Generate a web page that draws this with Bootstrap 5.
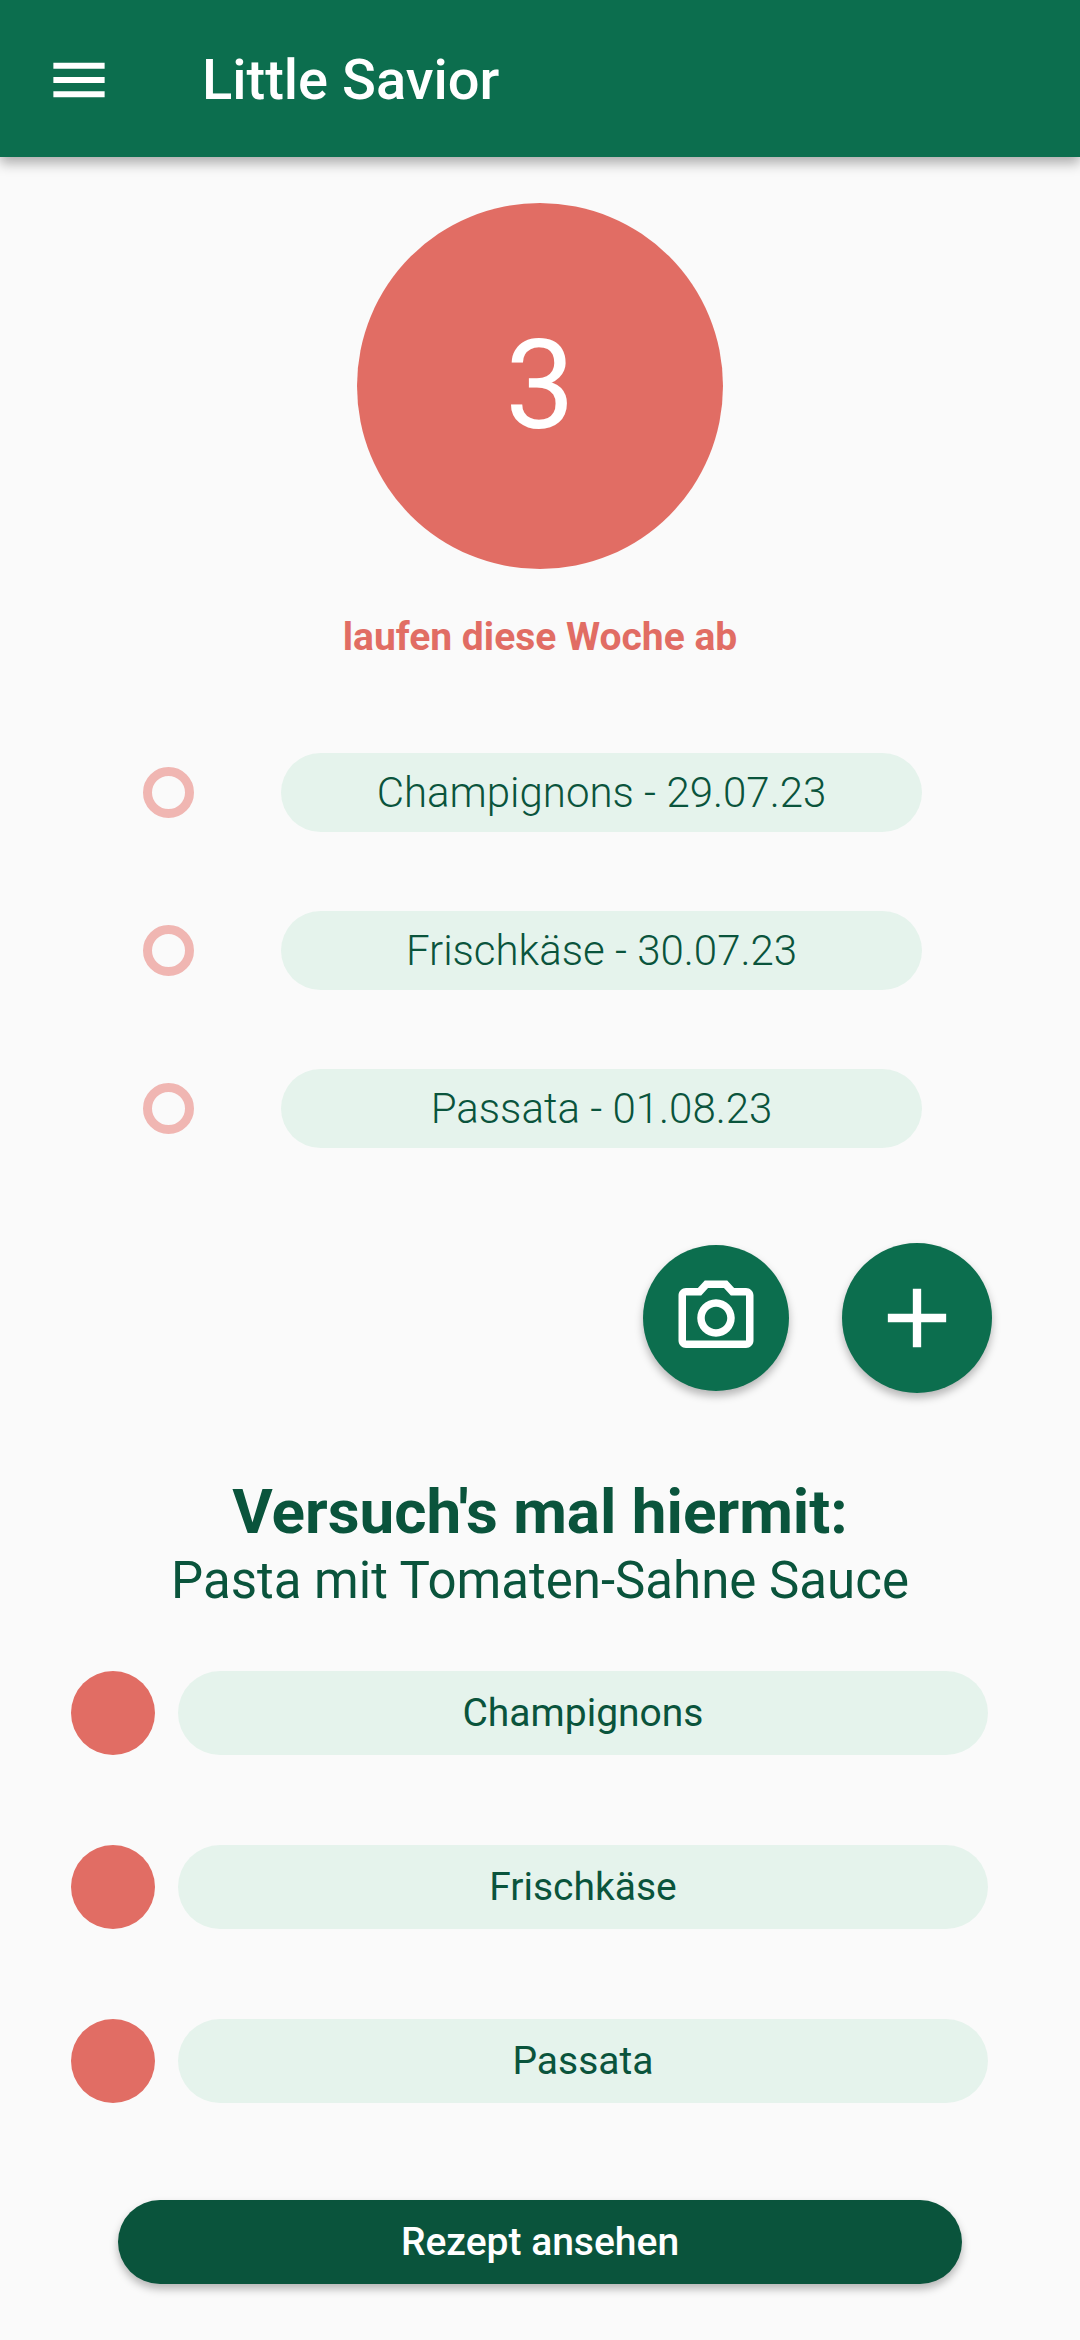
<!DOCTYPE html>
<html lang="de">
<head>
<meta charset="utf-8">
<meta name="viewport" content="width=device-width, initial-scale=1">
<title>Little Savior</title>
<link href="https://cdn.jsdelivr.net/npm/bootstrap@5.3.0/dist/css/bootstrap.min.css" rel="stylesheet">
<style>
  :root {
    --leaf: #0c6e4e;
    --forest: #0a543c;
    --mint: #e5f3ec;
    --coral: #e16d64;
    --coral-soft: #f0b6b2;
  }
  body { background: #fafafa; color: var(--forest); font-family: Roboto, "Liberation Sans", sans-serif; }
  .app-bar { height: 157px; padding: 2px 40px 0; gap: 84px; background: var(--leaf); box-shadow: 0 6px 12px rgba(0, 0, 0, .32); }
  .menu-btn { width: 78px; height: 78px; color: #fff; }
  .app-title { font-size: 56px; line-height: 66px; font-weight: 500; }
  .count-disc { width: 366px; height: 366px; margin-top: 46px; background: var(--coral); font-size: 124px; line-height: 146px; }
  .count-note { margin-top: 45px; color: var(--coral); font-size: 39px; line-height: 46px; font-weight: 700; }
  .expiry-list { margin-top: 93px; padding: 0 158px 0 143px; gap: 79px; }
  .expiry-item { gap: 87px; }
  .expiry-item .form-check-input { width: 51px; height: 51px; margin: 0; border: 9px solid var(--coral-soft); background-color: transparent; }
  .pill { background: var(--mint); text-align: center; }
  .expiry-item .pill { font-size: 42px; line-height: 79px; font-weight: 300; }
  .action-row { margin-top: 95px; padding-right: 88px; gap: 53px; }
  .fab { width: 146px; height: 146px; background: var(--leaf); color: #fff; box-shadow: 0 5px 8px rgba(0, 0, 0, .28); }
  .fab-lg { width: 150px; height: 150px; }
  .fab:hover, .fab:active, .menu-btn:hover { color: #fff; background: var(--leaf); }
  .recipe-title { margin: 82px 0 0; font-size: 62px; line-height: 73px; font-weight: 700; }
  .recipe-name { margin: 3px 0 0; font-size: 51px; line-height: 60px; }
  .ingredient-list { margin: 60px 0 0; padding: 0 92px 0 71px; gap: 90px; }
  .ingredient { gap: 23px; font-size: 39px; line-height: 84px; }
  .dot { width: 84px; height: 84px; background: var(--coral); }
  .recipe-cta { padding: 97px 118px 56px; }
  .recipe-btn { padding: 0; border: 0; background: var(--forest); color: #fff; font-size: 39px; line-height: 84px; font-weight: 500; box-shadow: 0 5px 8px rgba(0, 0, 0, .28); }
  .recipe-btn:hover { background: var(--leaf); color: #fff; }
</style>
</head>
<body>
<header class="app-bar navbar flex-nowrap justify-content-start">
  <button type="button" class="menu-btn btn border-0 p-0 d-flex align-items-center justify-content-center" aria-label="Menü">
    <svg width="100" height="100" viewBox="0 0 24 24" fill="currentColor" class="flex-shrink-0" aria-hidden="true"><path d="M5.850 16.150h12.300v-1.450H5.850zM5.850 12.720h12.300v-1.450H5.850zM5.850 9.300h12.300V7.850H5.850z"/></svg>
  </button>
  <h1 class="app-title text-white m-0">Little Savior</h1>
</header>

<main class="d-flex flex-column">
  <section class="d-flex flex-column align-items-center">
    <div class="count-disc rounded-circle text-white d-flex align-items-center justify-content-center">3</div>
    <p class="count-note mb-0">laufen diese Woche ab</p>
  </section>

  <section class="expiry-list d-flex flex-column">
    <div class="expiry-item d-flex align-items-center">
      <input class="form-check-input flex-shrink-0" type="radio" name="item1" id="item1">
      <label class="pill rounded-pill flex-grow-1" for="item1">Champignons - 29.07.23</label>
    </div>
    <div class="expiry-item d-flex align-items-center">
      <input class="form-check-input flex-shrink-0" type="radio" name="item2" id="item2">
      <label class="pill rounded-pill flex-grow-1" for="item2">Frischkäse - 30.07.23</label>
    </div>
    <div class="expiry-item d-flex align-items-center">
      <input class="form-check-input flex-shrink-0" type="radio" name="item3" id="item3">
      <label class="pill rounded-pill flex-grow-1" for="item3">Passata - 01.08.23</label>
    </div>
  </section>

  <div class="action-row d-flex justify-content-end align-items-center">
    <button type="button" class="fab btn rounded-circle border-0 p-0 d-flex align-items-center justify-content-center" aria-label="Foto aufnehmen">
      <svg width="90" height="90" viewBox="0 0 24 24" fill="currentColor" aria-hidden="true"><path d="M14.12 4l1.83 2H20v12H4V6h4.05l1.83-2h4.24M15 2H9L7.17 4H4c-1.1 0-2 .9-2 2v12c0 1.1.9 2 2 2h16c1.1 0 2-.9 2-2V6c0-1.1-.9-2-2-2h-3.17L15 2zm-3 7c1.65 0 3 1.35 3 3s-1.35 3-3 3-3-1.35-3-3 1.35-3 3-3m0-2c-2.76 0-5 2.24-5 5s2.24 5 5 5 5-2.24 5-5-2.24-5-5-5z"/></svg>
    </button>
    <button type="button" class="fab fab-lg btn rounded-circle border-0 p-0 d-flex align-items-center justify-content-center" aria-label="Hinzufügen">
      <svg width="100" height="100" viewBox="0 0 24 24" fill="currentColor" aria-hidden="true"><path d="M19 13h-6v6h-2v-6H5v-2h6V5h2v6h6v2z"/></svg>
    </button>
  </div>

  <section class="d-flex flex-column">
    <h2 class="recipe-title text-center">Versuch's mal hiermit:</h2>
    <p class="recipe-name text-center">Pasta mit Tomaten-Sahne Sauce</p>
    <ul class="ingredient-list list-unstyled d-flex flex-column">
      <li class="ingredient d-flex"><span class="dot rounded-circle flex-shrink-0"></span><span class="pill rounded-pill flex-grow-1">Champignons</span></li>
      <li class="ingredient d-flex"><span class="dot rounded-circle flex-shrink-0"></span><span class="pill rounded-pill flex-grow-1">Frischkäse</span></li>
      <li class="ingredient d-flex"><span class="dot rounded-circle flex-shrink-0"></span><span class="pill rounded-pill flex-grow-1">Passata</span></li>
    </ul>
    <div class="recipe-cta d-flex">
      <button type="button" class="recipe-btn btn rounded-pill w-100">Rezept ansehen</button>
    </div>
  </section>
</main>
<script src="https://cdn.jsdelivr.net/npm/bootstrap@5.3.0/dist/js/bootstrap.bundle.min.js"></script>
</body>
</html>
